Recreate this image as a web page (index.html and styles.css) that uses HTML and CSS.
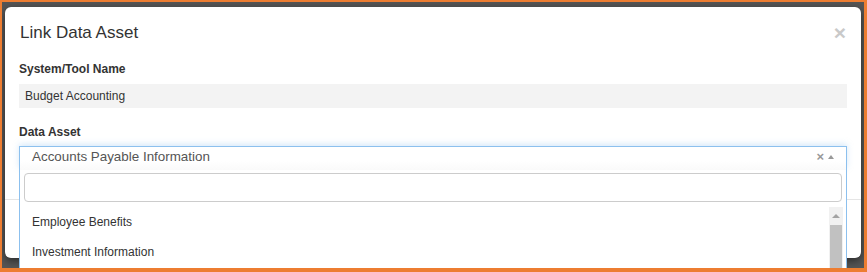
FILE: index.html
```html
<!DOCTYPE html>
<html lang="en">
<head>
  <meta charset="UTF-8">
  <title>Link Data Asset</title>
  <link rel="stylesheet" href="styles.css">
</head>
<body>
  <div class="frame">
    <div class="modal">
      <div class="modal__header">
        <h4 class="modal__title">Link Data Asset</h4>
        <span class="modal__close">&times;</span>
      </div>
      <div class="modal__body">
        <div class="field">
          <label class="field__label">System/Tool Name</label>
          <div class="field__static">Budget Accounting</div>
        </div>
        <div class="field field--last">
          <label class="field__label">Data Asset</label>
          <div class="select">
            <span class="select__value">Accounts Payable Information</span>
            <span class="select__clear">&times;</span>
            <span class="select__arrow"></span>
            <div class="select__drop">
              <div class="select__search"></div>
              <div class="select__results">
                <ul class="select__list">
                  <li class="select__item">Employee Benefits</li>
                  <li class="select__item">Investment Information</li>
                </ul>
                <div class="scrollbar">
                  <div class="scrollbar__up"></div>
                  <div class="scrollbar__thumb"></div>
                </div>
              </div>
            </div>
          </div>
        </div>
      </div>
      <div class="modal__footer"></div>
    </div>
  </div>
</body>
</html>
```

FILE: styles.css
```css
* {
  margin: 0;
  padding: 0;
  box-sizing: border-box;
}

body {
  font-family: "Liberation Sans", Arial, sans-serif;
  color: #333;
  background: #ed7d31;
}

/* ============= frame / backdrop ============= */
.frame {
  width: 867px;
  height: 272px;
  border: solid #ed7d31;
  border-width: 2px 3px 4px 2px;
  background: #555;
  padding: 5px 3px 0 3px;
  overflow: hidden;
}

/* ============= modal ============= */
.modal {
  position: relative;
  height: 251px;
  background: #fff;
  border-radius: 6px;
  box-shadow: 0 3px 9px rgba(0, 0, 0, 0.5);
}

.modal__header {
  display: flex;
  justify-content: space-between;
  align-items: center;
  padding: 15px 15px 17px 15px;
}

.modal__title {
  font-size: 17px;
  font-weight: 400;
  line-height: 22px;
  color: #333;
}

.modal__close {
  font-size: 21px;
  font-weight: 700;
  line-height: 22px;
  color: #c9c9c9;
}

.modal__body {
  padding: 0 14px 29px 14px;
}

.modal__footer {
  border-top: 1px solid #e5e5e5;
  height: 58px;
}

/* ============= fields ============= */
.field {
  margin-bottom: 16px;
}

.field--last {
  margin-bottom: 0;
}

.field__label {
  display: block;
  font-size: 12px;
  font-weight: 700;
  line-height: 17px;
  margin-bottom: 6px;
  color: #333;
}

.field--last .field__label {
  margin-bottom: 5px;
}

.field__static {
  height: 24px;
  line-height: 24px;
  padding: 0 6px;
  background: #f3f3f3;
  font-size: 12px;
  color: #333;
}

/* ============= select ============= */
.select {
  position: relative;
  display: flex;
  align-items: flex-start;
  height: 24px;
  padding: 1px 12px 0 12px;
  border: 1px solid #8cc0ee;
  border-bottom: 0;
  background: linear-gradient(to bottom, #fff 60%, #fafafa 100%);
  box-shadow: 0 -2px 6px rgba(140, 192, 238, 0.35);
  z-index: 2;
}

.select__value {
  flex: 1;
  font-size: 13.4px;
  color: #555;
  line-height: 18px;
}

.select__clear {
  font-size: 13px;
  font-weight: 700;
  line-height: 18px;
  color: #999;
  margin-right: 4px;
}

.select__arrow {
  width: 0;
  height: 0;
  margin-top: 7px;
  border-left: 3px solid transparent;
  border-right: 3px solid transparent;
  border-bottom: 4px solid #999;
}

.select__drop {
  position: absolute;
  top: 100%;
  left: -1px;
  right: -1px;
  height: 110px;
  padding: 3px 4px 0 4px;
  border: 1px solid #8cc0ee;
  border-top: 0;
  background: #fff;
}

.select__search {
  height: 29px;
  border: 1px solid #ccc;
  border-radius: 4px;
  background: #fff;
}

.select__results {
  display: flex;
  margin: 5px -1px 0 0;
  height: 80px;
}

.select__list {
  flex: 1;
  list-style: none;
}

.select__item {
  height: 30px;
  line-height: 30px;
  padding-left: 8px;
  font-size: 12px;
  color: #333;
}

.scrollbar {
  width: 14px;
  background: #f1f1f1;
}

.scrollbar__up {
  height: 18px;
  display: flex;
  justify-content: center;
  align-items: center;
}

.scrollbar__up::before {
  content: "";
  border-left: 4px solid transparent;
  border-right: 4px solid transparent;
  border-bottom: 4px solid #a3a3a3;
}

.scrollbar__thumb {
  height: 60px;
  margin: 0 1px;
  background: #c1c1c1;
}
```
